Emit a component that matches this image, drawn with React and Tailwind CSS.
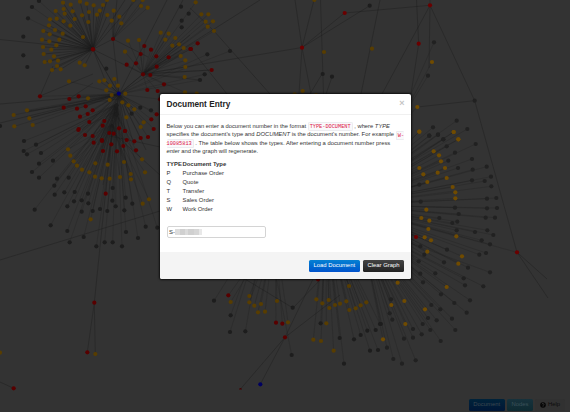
import React from "react";

const COLORS = { o: "#583d00", r: "#580000", k: "#1d1d1d", b: "#000060", O: "#704b00", R: "#6a0000", K: "#212121" };

// Each cluster has an origin, and holds points in thirds of a pixel.
const CLUSTERS = [
  { x: 0, y: 0, kind: "o", hub: [93, 49.3], pts: "189,8 212,14 240,5 260,11 281,16 309,15 167,33 191,27 194,41 218,34 246,46 267,36 299,32 291,44 322,45 150,58 170,56 191,64 224,57 265,66 147,76 130,93 149,103 165,90 188,101 211,77 126,119 148,124 178,119 169,136 129,141 154,149 131,162 162,169 134,186 150,184 174,182 171,198 182,208 156,210 249,111 239,188 254,196 321,0" },
  { x: 0, y: 0, kind: "k", hub: [93, 49.3], pts: "96,21 117,3 84,55" },
  { x: 0, y: 0, kind: "k", hub: null, pts: "70,110 70,166 82,201 543,20 545,62 566,41 545,82 0,378 319,206" },
  { x: 0, y: 0, kind: "o", hub: [113, 39], pts: "341,32 335,62 358,50 364,70 423,18 443,23 400,0 428,0" },
  { x: 0, y: 0, kind: "o", hub: [143, 74], pts: "482,98 506,101 496,119 526,114 517,137 537,133 551,144 542,168 556,181 556,201 554,231 555,277 417,120 384,122 375,155" },
  { x: 0, y: 0, kind: "r", hub: [143, 74], pts: "433,138 453,149 422,162 469,169 506,172 408,190 380,194 470,200 451,225 492,253 442,270 473,273 571,147 429,223" },
  { x: 0, y: 0, kind: "r", hub: [119, 94], pts: "279,148 120,289 236,289 208,297 191,323 231,326 257,319 278,331 263,342 240,350 268,366 313,363 308,377 236,387 255,405 278,408 357,385 375,393 328,399 341,401 461,387 454,358 470,343 480,298 422,414 444,411 380,420 306,420" },
  { x: 0, y: 0, kind: "o", hub: [119, 94], pts: "207,244 298,244 313,241 343,237 330,257 354,257 319,271 335,285 376,281 329,300 264,295 367,307 385,316 403,328 379,352 431,367 422,381 81,331 41,345 88,355 98,375 43,379" },
  { x: 0, y: 0, kind: "k", hub: [119, 94], pts: "350,316 350,343 395,341 421,323 453,331" },
  { x: 190, y: 0, kind: "o", hub: [143, 74], pts: "17,7 34,43 55,43 47,65 69,64 53,80 72,93" },
  { x: 190, y: 0, kind: "k", hub: [119, 94], pts: "120,153 52,163 44,223 30,240" },
  { x: 190, y: 0, kind: "r", hub: [143, 74], pts: "3,147 23,130 65,210" },
  { x: 190, y: 0, kind: "o", hub: null, pts: "373,0 402,156 546,146 338,273 314,283 378,285 20,281" },
  { x: 190, y: 0, kind: "k", hub: null, pts: "539,17 398,222 426,230" },
  { x: 190, y: 0, kind: "R", hub: null, pts: "464,39 336,143" },
  { x: 0, y: 130, kind: "r", hub: [115, 112], pts: "235,0 281,38 306,33 334,43 309,63 351,64 370,48 403,34 408,61 375,3 317,191" },
  { x: 0, y: 130, kind: "k", hub: [117, 104], pts: "72,33 108,44 71,63 81,73 123,69 117,101 159,92 96,126 117,143 171,146 206,143 163,167 164,194 193,187 224,186 264,191 222,214 245,211 265,220 202,229 245,245 278,243 300,237 322,243 347,229 337,212 338,174 377,203 397,221 373,241 104,239 152,286 202,303 209,337 251,321 289,349 314,337 338,337 366,349 378,306 414,324 437,290 472,293" },
  { x: 0, y: 130, kind: "o", hub: [112, 124], pts: "204,58 211,77 221,94 231,107 246,119 268,127 285,140 305,145 329,146 360,141 286,100 323,104 372,96 392,132 393,148 426,88 435,127 447,208 428,221 272,268" },
  { x: 380, y: 0, kind: "R", hub: null, pts: "150,16 116,131" },
  { x: 380, y: 0, kind: "K", hub: [395, 130], pts: "162,127 144,227" },
  { x: 380, y: 0, kind: "O", hub: [395, 130], pts: "156,186 112,321" },
  { x: 380, y: 0, kind: "K", hub: null, pts: "284,302" },
  { x: 380, y: 0, kind: "K", hub: [345, 200], pts: "230,362 262,387 159,382 148,407 174,404 190,418" },
  { x: 380, y: 0, kind: "O", hub: [345, 200], pts: "118,395 221,396 235,418" },
  { x: 400, y: 130, kind: "K", hub: [345, 205], pts: "88,17 114,14 130,28 140,49 165,68 227,42 216,87 145,92 174,114 218,119 260,110 273,140 254,153 216,151 274,169 58,164 62,215 165,233 261,206 289,204 261,235 291,234 176,252 118,264 157,279 172,275 257,263 285,263 170,301 225,306 262,301 280,315 245,331 270,343 61,349 73,374 141,359 238,374 258,369 56,394 132,397 204,413" },
  { x: 400, y: 130, kind: "O", hub: [345, 205], pts: "58,5 161,6 175,28 101,64 117,76 123,94 135,114 58,114 70,133 113,128 140,144 82,156 158,171 166,187 166,205 79,239 64,264 88,272 85,297 74,322 93,331 169,319 82,365 186,379 175,401" },
  { x: 400, y: 130, kind: "R", hub: [345, 205], pts: "48,321 351,367" },
  { x: 380, y: 270, kind: "K", hub: [360, 225], pts: "121,11 166,10 251,25 330,7 129,37 255,46 310,49 183,73 270,91 223,99 260,128 154,105 181,118 33,88 29,130 37,149 3,162 144,144 170,151 216,146 128,162 99,177 151,180 125,193 226,180 72,206 99,203 182,213 21,233 40,267 66,281 107,271" },
  { x: 380, y: 270, kind: "O", hub: [360, 225], pts: "53,38 200,51 73,93 34,105 135,118 76,162 9,208" },
  { x: 190, y: 270, kind: "o", hub: [326, 215], pts: "477,48 379,88 397,100 416,90 418,114 435,105 450,101 469,94 478,120 497,115 512,106 529,97 409,160 370,209 393,213 431,242" },
  { x: 190, y: 270, kind: "k", hub: [326, 215], pts: "392,160 449,204 492,208 512,195 532,182 557,180 570,162 540,242 564,240 462,281" },
  { x: 190, y: 270, kind: "o", hub: [275, 230], pts: "178,78 178,97 193,107 213,102 204,127 225,125 261,93 294,157 122,96" },
  { x: 190, y: 270, kind: "r", hub: [275, 230], pts: "258,158 277,161 115,76" },
  { x: 190, y: 270, kind: "k", hub: [265, 220], pts: "72,92 122,136 120,186 166,184 305,255" },
  { x: 190, y: 270, kind: "k", hub: null, pts: "308,113" },
  { x: 190, y: 270, kind: "r", hub: null, pts: "285,202 384,28" },
  { x: 190, y: 270, kind: "b", hub: null, pts: "211,343" },
  { x: 0, y: 270, kind: "r", hub: null, pts: "283,98 262,247 41,355" },
  { x: 0, y: 270, kind: "o", hub: null, pts: "286,252 0,248" },
];

const NODES = CLUSTERS.flatMap((c) =>
  c.pts.split(" ").map((p) => {
    const [a, b] = p.split(",").map(Number);
    return { x: c.x + a / 3, y: c.y + b / 3, kind: c.kind, hub: c.hub };
  })
);

const LINKS = [
  "M0 39.5L93 49.3L113 39L117 0M93 49.3L143 74M93 49.3L119 94M93 49.3L105 80L119 94M113 39L119 94M93 49.3L125 0M93 49.3L136 0",
  "M143 74L302 47.5L344.5 13L430 5.3M302 47.5L369.7 5.7M302 47.5L295 0M302 47.5L314 0M302 47.5L299 94M302 47.5L311 94M320.5 0L323.5 94M380 0L361 94",
  "M143 74L260 0M119 94L167 0M183 0L143 74M214 31L270 94M190 8L214 31M191 49L227 94M119 94L190 35M119 94L180 55M113 39L148 57",
  "M143 74L119 94M119 94L0 104M119 94L0 123M119 94L27 112M40 96L53 66M40 96L93 74M69 99L93 83M27 111L119 99M29 118L119 94",
  "M430 5.3L382 94M430 5.3L429 68M430 5.3V0M430 5.3L474.7 100.7L517 252.3L548 298M416.5 0L418.7 43.7L411 94M417.3 107L474.7 100.7M517 252.3L547 279",
  "M0 260L160 211M113 120L94.3 302.7L87.3 352.3M94.3 302.7L95.3 354M13.7 388.3L0 382M285 337.3L240.5 389M285 337.3L260.3 384.3M285 337.3L313 279M285 337.3L340 295M293 308L230 270M293 308L320 280",
  "M119 94L103 185M119 94L98 145M119 94L124 151M119 94L134 145M119 94L146 150M110 130L160 175M119 94L82 130M110 136L160 147",
  "M322 74L310 94M332 77L326 94M143 74L200 80M143 74L211 70",
];

const TYPES = [
  ["P", "Purchase Order"],
  ["Q", "Quote"],
  ["T", "Transfer"],
  ["S", "Sales Order"],
  ["W", "Work Order"],
];

function Graph() {
  return (
    <svg className="absolute inset-0" width="570" height="412" viewBox="0 0 570 412">
      <g stroke="#1a1a1a" strokeWidth="0.75" fill="none">
        {LINKS.map((d, i) => (
          <path key={i} d={d} strokeOpacity="0.48" />
        ))}
        {NODES.filter((n) => n.hub).map((n, i) => (
          <line key={i} x1={n.x} y1={n.y} x2={n.hub[0]} y2={n.hub[1]} strokeOpacity={n.kind === "o" && n.hub[0] === 93 ? 0.55 : 0.34} />
        ))}
      </g>
      {NODES.map((n, i) => (
        <circle key={i} cx={n.x} cy={n.y} r="2.1" fill={COLORS[n.kind]} />
      ))}
      <circle cx="93" cy="49.3" r="2.1" fill="#650000" />
      <circle cx="113" cy="39" r="2.1" fill="#580000" />
      <circle cx="118.8" cy="93.6" r="2.1" fill="#000070" />
      <path d="M239 389.6a1.5 1.5 0 0 1 3 0z" fill="#420000" />
    </svg>
  );
}

function Code({ children, className = "" }) {
  return (
    <code className={`rounded-[1.5px] border border-[#ececf0] bg-[#f9f9fb] font-['Liberation_Mono',monospace] text-[5.25px] leading-none text-[#dd1144] ${className}`}>
      {children}
    </code>
  );
}

export default function App() {
  return (
    <div className="relative flex h-[412px] w-[570px] flex-col overflow-hidden bg-[#333333] font-['Liberation_Sans',Arial,sans-serif] text-[5.9px] leading-[8.6px] text-[#333333]">
      <Graph />
      <main className="relative ml-[160px] mt-[94px] flex h-[184.5px] w-[251px] shrink-0 flex-col overflow-hidden rounded-[2px] bg-white shadow-[0_0_2px_1px_rgba(0,0,0,0.7)]">
        <header className="flex h-[20.5px] shrink-0 items-center justify-between border-b border-[#f0f0f0] pl-[6.5px] pr-[6.5px]">
          <h1 className="pt-[3px] text-[8.25px] font-bold text-[#222222]">Document Entry</h1>
          <button className="text-[9px] font-bold text-[#c4c4c4]">×</button>
        </header>
        <section className="flex grow flex-col pl-[6.5px] pt-[7px]">
          <div className="whitespace-nowrap text-[5.8px]">
            <div className="h-[8.6px]">
              Below you can enter a document number in the format <Code className="px-[1px] py-[0.5px]">TYPE-DOCUMENT</Code> , where <em>TYPE</em>
            </div>
            <div className="h-[8.6px] text-[5.86px]">
              specifies the document's type and <em>DOCUMENT</em> is the document's number. For example <Code className="border-r-0 py-[0.5px] pl-[1px]">W-</Code>
            </div>
            <div className="h-[8.6px] text-[5.83px]">
              <Code className="border-l-0 py-[0.5px] pr-[1px]">10085813</Code> . The table below shows the types. After entering a document number press
            </div>
            <div className="h-[8.6px]">
              <em>enter</em> and the graph will regenerate.
            </div>
          </div>
          <div className="mt-[4px] grid grid-cols-[16px_80px] leading-[9px]">
            <b>TYPE</b>
            <b>Document Type</b>
            {TYPES.map(([code, name]) => (
              <React.Fragment key={code}>
                <span>{code}</span>
                <span>{name}</span>
              </React.Fragment>
            ))}
          </div>
          <div className="mt-[12px] flex h-[12.5px] w-[99px] items-center rounded-[2px] border border-[#d4d4d4] pl-[1.5px]">
            <span>S-</span>
            <span className="flex h-[6px] opacity-90">
              <i className="w-[5px] bg-[#dadada]" />
              <i className="w-[5px] bg-[#cccccc]" />
              <i className="w-[3px] bg-[#d8d8d8]" />
              <i className="w-[6px] bg-[#cbcbcb]" />
              <i className="w-[5px] bg-[#d2d2d2]" />
              <i className="w-[3px] bg-[#e6e6e6]" />
            </span>
          </div>
        </section>
        <footer className="flex h-[26.5px] shrink-0 items-center justify-end gap-[3.5px] bg-[#f4f4f4] pr-[7px] pt-px text-white">
          <button className="h-[12.5px] w-[50.5px] rounded-[1.5px] bg-linear-to-b from-[#0880d2] to-[#0453cc]">Load Document</button>
          <button className="h-[12.5px] w-[41px] rounded-[1.5px] bg-linear-to-b from-[#444444] to-[#222222]">Clear Graph</button>
        </footer>
      </main>
      <nav className="relative mt-auto flex justify-end gap-[2px] pb-[1px] pr-[5px]">
        <button className="h-[12.5px] w-[36.5px] rounded-[1.5px] bg-linear-to-b from-[#00233a] to-[#001636] text-[#3c4850]">Document</button>
        <button className="h-[12.5px] w-[26px] rounded-[1.5px] bg-linear-to-b from-[#17323c] to-[#0e2a31] text-[#3c525a]">Nodes</button>
        <button className="flex h-[12.5px] w-[30px] items-center justify-center gap-[2px] rounded-[1.5px] bg-[#313131] text-[#0c0c0c]">
          <svg width="6" height="6" viewBox="0 0 6 6">
            <circle cx="3" cy="3" r="2.8" fill="#050505" />
            <path d="M2.1 2.3a.9.8 0 1 1 1.3.8L3 3.6M3 4.2v.6" fill="none" stroke="#4c4c4c" strokeWidth=".7" />
          </svg>
          Help
        </button>
      </nav>
    </div>
  );
}
